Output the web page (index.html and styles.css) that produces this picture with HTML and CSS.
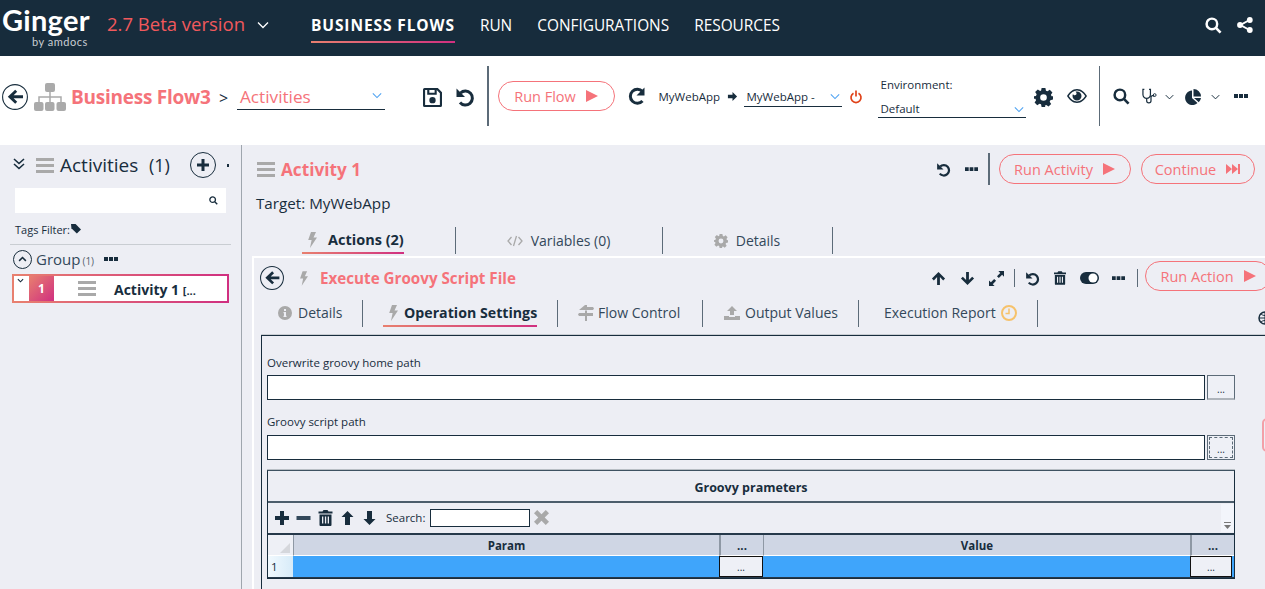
FILE: index.html
```html
<!DOCTYPE html>
<html lang="en">
<head>
<meta charset="utf-8">
<title>Ginger</title>
<link rel="stylesheet" href="styles.css">
</head>
<body>
<svg class="defs" width="0" height="0" aria-hidden="true">
  <defs>
    <symbol id="i-back" viewBox="0 0 26 26"><circle cx="13" cy="13" r="12.4" fill="none" stroke="currentColor" stroke-width="1.1"/><path d="M13.2 5.800l2 2-3.600 3.500H21v3h-9.400l3.600 3.500-2 2L5.800 12.800z" fill="currentColor"/></symbol>
    <symbol id="i-undo" viewBox="0 0 20 20"><path d="M5.500 6A7 7 0 1 1 5 15.500" fill="none" stroke="currentColor" stroke-width="3"/><path d="M1.500 1.500v8.500h8.500z" fill="currentColor"/></symbol>
    <symbol id="i-dots" viewBox="0 0 14 5"><path d="M0 0h4v4H0zM5 0h4v4H5zM10 0h4v4h-4z" fill="currentColor"/></symbol>
    <symbol id="i-bars" viewBox="0 0 18 15"><path d="M0 0h18v3H0zM0 6h18v3H0zM0 12h18v3H0z" fill="currentColor"/></symbol>
    <symbol id="i-bolt" viewBox="0 0 10 16"><path d="M4 0h5L6.500 5.500H10L3 16l1.600-8H1.200z" fill="currentColor"/></symbol>
    <symbol id="i-play" viewBox="0 0 12 12"><path d="M0 0l12 6-12 6z" fill="currentColor"/></symbol>
    <symbol id="i-search" viewBox="0 0 18 18"><circle cx="7.300" cy="7.300" r="5.600" fill="none" stroke="currentColor" stroke-width="2.600"/><path d="M11.500 11.500l5 5" stroke="currentColor" stroke-width="2.800"/></symbol>
    <symbol id="i-chev" viewBox="0 0 12 8"><path d="M1 1.500l5 5 5-5" fill="none" stroke="currentColor" stroke-width="1.300"/></symbol>
    <symbol id="i-gear" viewBox="0 0 20 20"><path fill-rule="evenodd" d="M8 0h4l.6 2.800 1.600.7 2.400-1.600 2.800 2.800-1.600 2.400.7 1.600L20 8.800v3.400l-2.800.6-.7 1.600 1.600 2.400-2.800 2.800-2.400-1.600-1.600.7L12 20H8l-.6-2.800-1.600-.7L3.400 18.100.6 15.300l1.600-2.400-.7-1.600L0 11.200V8.800l2.100-.5.700-1.600L1.200 4.300 4 1.500l2.400 1.600 1.100-.5zM10 6.500a3.500 3.500 0 1 0 0 7 3.500 3.500 0 0 0 0-7z" fill="currentColor"/></symbol>
    <symbol id="i-up" viewBox="0 0 16 16"><path d="M8 1l7 7-2 2-3.500-3.500V15h-3V6.500L3 10 1 8z" fill="currentColor"/></symbol>
    <symbol id="i-down" viewBox="0 0 16 16"><path d="M8 15L1 8l2-2 3.500 3.500V1h3v8.500L13 6l2 2z" fill="currentColor"/></symbol>
    <symbol id="i-trash" viewBox="0 0 14 16"><path fill-rule="evenodd" d="M5 0h4l1 1.500h4v2H0v-2h4zM1 4.500h12V15a1 1 0 0 1-1 1H2a1 1 0 0 1-1-1zM3.500 6.500v7h1.300v-7zM6.400 6.500v7h1.300v-7zM9.200 6.500v7h1.300v-7z" fill="currentColor"/></symbol>
  </defs>
</svg>

<header class="topbar">
  <div class="logo">
    <span class="logo-name">Ginger</span>
    <span class="logo-by">by amdocs</span>
  </div>
  <span class="version">2.7 Beta version</span>
  <svg class="version-chev"><use href="#i-chev"/></svg>
  <nav class="nav">
    <a class="nav-item nav-active">BUSINESS FLOWS</a>
    <a class="nav-item">RUN</a>
    <a class="nav-item">CONFIGURATIONS</a>
    <a class="nav-item">RESOURCES</a>
  </nav>
  <div class="top-icons">
    <svg class="top-search"><use href="#i-search"/></svg>
    <svg class="top-share" viewBox="0 0 16 16"><path d="M12.500 3L3.500 8l9 5" fill="none" stroke="currentColor" stroke-width="2"/><circle cx="12.800" cy="3" r="2.900" fill="currentColor"/><circle cx="3" cy="8" r="2.900" fill="currentColor"/><circle cx="12.800" cy="13" r="2.900" fill="currentColor"/></svg>
  </div>
</header>

<section class="flowbar">
  <svg class="flow-back"><use href="#i-back"/></svg>
  <svg class="flow-org" viewBox="0 0 32 28"><path d="M16 8v6M5 20v-6h22v6M16 14v6" fill="none" stroke="#aaa" stroke-width="1.500"/><rect x="11" y="0" width="10" height="9" rx="2" fill="#aaa"/><rect x="0" y="19" width="9.500" height="9" rx="2" fill="#aaa"/><rect x="11" y="19" width="9.500" height="9" rx="2" fill="#aaa"/><rect x="22.500" y="19" width="9.500" height="9" rx="2" fill="#aaa"/></svg>
  <span class="flow-name">Business Flow3</span>
  <span class="flow-gt">&gt;</span>
  <div class="select select-view"><span>Activities</span><svg class="sel-chev"><use href="#i-chev"/></svg></div>
  <svg class="flow-save" viewBox="0 0 18 18"><path fill-rule="evenodd" d="M1.500 0H14l4 4v12.500a1.500 1.500 0 0 1-1.500 1.500h-15A1.500 1.500 0 0 1 0 16.500v-15A1.500 1.500 0 0 1 1.500 0zM2 2v14h14V5l-3-3v4.500H4V2zM6 2v2.500h5V2zM9 8.500a3 3 0 1 1 0 6 3 3 0 0 1 0-6z" fill="currentColor"/></svg>
  <svg class="flow-undo"><use href="#i-undo"/></svg>
  <i class="vline flow-div1"></i>
  <button class="pill pill-flow">Run Flow<svg class="pill-play"><use href="#i-play"/></svg></button>
  <svg class="flow-refresh" viewBox="0 0 16 20"><path d="M13.500 5.500A7 7 0 1 0 13.500 15" fill="none" stroke="currentColor" stroke-width="3"/><path d="M15.500 1.500v8h-8z" fill="currentColor"/></svg>
  <span class="flow-app">MyWebApp</span>
  <svg class="flow-arrow" viewBox="0 0 12 12"><path d="M6 1l5 5-5 5V8H1V4h5z" fill="currentColor"/></svg>
  <div class="select select-app"><span>MyWebApp -</span><svg class="sel-chev"><use href="#i-chev"/></svg></div>
  <svg class="flow-power" viewBox="0 0 12 14"><path d="M3.500 3.200a5 5 0 1 0 5 0M6 .5v6" fill="none" stroke="currentColor" stroke-width="1.700"/></svg>
  <div class="env">
    <span class="env-label">Environment:</span>
    <div class="select select-env"><span>Default</span><svg class="sel-chev"><use href="#i-chev"/></svg></div>
  </div>
  <svg class="flow-gear"><use href="#i-gear"/></svg>
  <svg class="flow-eye" viewBox="0 0 20 14"><path fill-rule="evenodd" d="M10 0c4.500 0 8 3.500 10 7-2 3.500-5.500 7-10 7S2 10.500 0 7c2-3.500 5.500-7 10-7zM10 1.500C6.800 1.500 3.800 3.800 1.800 7c2 3.200 5 5.500 8.200 5.500s6.200-2.300 8.200-5.500c-2-3.200-5-5.500-8.200-5.500zM10 2.500a4.500 4.500 0 1 1-4.500 4.500c0-.8.200-1.500.5-2.100a1.800 1.800 0 1 0 2.400-2.100c.5-.200 1-.3 1.600-.3z" fill="currentColor"/></svg>
  <i class="vline flow-div2"></i>
  <svg class="flow-search"><use href="#i-search"/></svg>
  <svg class="flow-steth" viewBox="0 0 16 16"><path d="M2.500 1H1v5.500a4 4 0 0 0 8 0V1H7.500M5 10.500V13a2.300 2.300 0 0 0 4.600 0V9.500a1.800 1.800 0 0 1 3.400-1" fill="none" stroke="currentColor" stroke-width="1.300"/><circle cx="13.500" cy="7" r="1.500" fill="none" stroke="currentColor"/></svg>
  <svg class="flow-chev1"><use href="#i-chev"/></svg>
  <svg class="flow-pie" viewBox="0 0 16 16"><path d="M7 1.500V9l5.500 5A7.300 7.300 0 1 1 7 1.500zM8.500 0a7.500 7.500 0 0 1 7.500 7.500H8.500zM9 9h7a7.500 7.500 0 0 1-2.200 4.200z" fill="currentColor"/></svg>
  <svg class="flow-chev2"><use href="#i-chev"/></svg>
  <svg class="flow-dots"><use href="#i-dots"/></svg>
</section>

<main class="workspace">
  <aside class="sidebar">
    <div class="side-head">
      <svg class="side-dbl" viewBox="0 0 12 12"><path d="M1 1l5 4.500L11 1M1 6l5 4.500L11 6" fill="none" stroke="currentColor" stroke-width="1.600"/></svg>
      <svg class="side-bars"><use href="#i-bars"/></svg>
      <span class="side-title">Activities</span>
      <span class="side-count">(1)</span>
      <span class="side-add"><svg viewBox="0 0 12 12"><path d="M4.500 0h3v4.500H12v3H7.500V12h-3V7.500H0v-3h4.500z" fill="currentColor"/></svg></span>
      <i class="side-clip"></i>
    </div>
    <div class="side-search"><svg><use href="#i-search"/></svg></div>
    <div class="side-tags">
      <span>Tags Filter:</span>
      <svg viewBox="0 0 12 12"><path d="M0 0h5.500L12 6.500 7 11.500.5 5z" fill="currentColor"/></svg>
    </div>
    <div class="side-group">
      <span class="group-toggle"><svg viewBox="0 0 12 8"><path d="M1.500 6.500L6 2l4.500 4.500" fill="none" stroke="currentColor" stroke-width="2"/></svg></span>
      <span class="group-name">Group</span>
      <span class="group-count">(1)</span>
      <svg class="group-dots"><use href="#i-dots"/></svg>
    </div>
    <div class="activity-card">
      <span class="card-caret"><svg viewBox="0 0 8 5"><path d="M1 1l3 3 3-3" fill="none" stroke="currentColor" stroke-width="1.300"/></svg></span>
      <span class="card-num">1</span>
      <svg class="card-bars"><use href="#i-bars"/></svg>
      <span class="card-title">Activity 1 <small>[...</small></span>
    </div>
  </aside>

  <section class="content">
    <div class="act-head">
      <svg class="act-bars"><use href="#i-bars"/></svg>
      <h1 class="act-title">Activity 1</h1>
      <svg class="act-undo"><use href="#i-undo"/></svg>
      <svg class="act-dots"><use href="#i-dots"/></svg>
      <i class="vline act-div"></i>
      <button class="pill pill-act">Run Activity<svg class="pill-play"><use href="#i-play"/></svg></button>
      <button class="pill pill-cont">Continue<svg class="pill-skip" viewBox="0 0 14 10"><path d="M0 0l6 5-6 5zM6 0l6 5-6 5zM12 0h2v10h-2z" fill="currentColor"/></svg></button>
    </div>
    <div class="act-target">Target: MyWebApp</div>
    <div class="tabs act-tabs">
      <div class="tab tab-actions"><span class="tab-on"><svg class="tab-bolt"><use href="#i-bolt"/></svg><b>Actions (2)</b></span></div>
      <div class="tab tab-vars"><svg class="tab-code" viewBox="0 0 16 10"><path d="M4.500 1L1 5l3.500 4M11.500 1L15 5l-3.500 4M9.500 0L6.500 10" fill="none" stroke="currentColor" stroke-width="1.300"/></svg>Variables (0)</div>
      <div class="tab tab-det"><svg class="tab-gear"><use href="#i-gear"/></svg>Details</div>
    </div>

    <div class="panel">
      <div class="panel-head">
        <svg class="panel-back"><use href="#i-back"/></svg>
        <svg class="panel-bolt"><use href="#i-bolt"/></svg>
        <h2 class="panel-title">Execute Groovy Script File</h2>
        <svg class="p-up"><use href="#i-up"/></svg>
        <svg class="p-down"><use href="#i-down"/></svg>
        <svg class="p-expand" viewBox="0 0 16 16"><path d="M10 0h6v6l-2-2-3.500 3.500-2-2L12 2zM6 16H0v-6l2 2 3.500-3.500 2 2L4 14z" fill="currentColor"/></svg>
        <i class="vline p-div1"></i>
        <svg class="p-undo"><use href="#i-undo"/></svg>
        <svg class="p-trash"><use href="#i-trash"/></svg>
        <svg class="p-toggle" viewBox="0 0 19 12"><rect width="19" height="12" rx="6" fill="currentColor"/><circle cx="13" cy="6" r="4.500" fill="#fff"/></svg>
        <svg class="p-dots"><use href="#i-dots"/></svg>
        <i class="vline p-div2"></i>
        <button class="pill pill-action">Run Action<svg class="pill-play"><use href="#i-play"/></svg></button>
      </div>
      <div class="tabs panel-tabs">
        <div class="ptab ptab-det"><svg class="ptab-info" viewBox="0 0 14 14"><path fill-rule="evenodd" d="M7 0a7 7 0 1 1 0 14A7 7 0 0 1 7 0zM6 3v2h2V3zM5.500 6v1.200H6v2.600h-.5V11h3V9.800H8V6z" fill="currentColor"/></svg>Details</div>
        <div class="ptab ptab-op"><span class="tab-on"><svg class="tab-bolt"><use href="#i-bolt"/></svg><b>Operation Settings</b></span></div>
        <div class="ptab ptab-flow"><svg class="ptab-sign" viewBox="0 0 16 16"><path d="M7 0h2v2h6l1 1.500L15 5H1zM7 5.500h2V8h6v3H9v5H7v-5H1L0 9.500 1 8h6z" fill="currentColor"/></svg>Flow Control</div>
        <div class="ptab ptab-out"><svg class="ptab-up" viewBox="0 0 16 14"><path d="M8 0l5 5h-3v4H6V5H3zM0 10h5v1h6v-1h5v4H0z" fill="currentColor"/></svg>Output Values</div>
        <div class="ptab ptab-rep">Execution Report<svg class="ptab-clock" viewBox="0 0 16 16"><circle cx="8" cy="8" r="7" fill="none" stroke="currentColor" stroke-width="2"/><path d="M8 3.500V8.500H4.500" fill="none" stroke="currentColor" stroke-width="1.500"/></svg></div>
      </div>
      <svg class="globe" viewBox="0 0 14 14"><circle cx="7" cy="7" r="6" fill="none" stroke="currentColor" stroke-width="1.500"/><path d="M7 1v12M1 7h12M3 3c2 2 6 2 8 0M3 11c2-2 6-2 8 0" fill="none" stroke="currentColor"/></svg>

      <div class="form-box">
        <label class="f-label f-first">Overwrite groovy home path</label>
        <div class="f-row"><div class="f-input"></div><button class="f-btn">...</button></div>
        <label class="f-label f-second">Groovy script path</label>
        <div class="f-row"><div class="f-input"></div><button class="f-btn f-focus"><span>...</span></button></div>
        <i class="edge-tab"></i>

        <div class="grid-box">
          <div class="grid-title">Groovy prameters</div>
          <div class="grid-tools">
            <svg class="gt-plus" viewBox="0 0 14 14"><path d="M5 0h4v5h5v4H9v5H5V9H0V5h5z" fill="currentColor"/></svg>
            <svg class="gt-minus" viewBox="0 0 14 4"><path d="M0 0h14v4H0z" fill="currentColor"/></svg>
            <svg class="gt-trash"><use href="#i-trash"/></svg>
            <svg class="gt-up" viewBox="0 0 12 14"><path d="M6 0l6 6H8.500v8h-5V6H0z" fill="currentColor"/></svg>
            <svg class="gt-down" viewBox="0 0 12 14"><path d="M6 14L0 8h3.500V0h5v8H12z" fill="currentColor"/></svg>
            <span class="gt-label">Search:</span>
            <div class="gt-input"></div>
            <svg class="gt-x" viewBox="0 0 14 14"><path d="M3 0l4 4 4-4 3 3-4 4 4 4-3 3-4-4-4 4-3-3 4-4-4-4z" fill="currentColor"/></svg>
            <div class="gt-scroll"><svg viewBox="0 0 7 7"><path d="M0 0h7v1H0zM0 3h7L3.500 7z" fill="currentColor"/></svg></div>
          </div>
          <div class="dg">
            <div class="dg-corner"><i></i></div>
            <div class="dg-h">Param</div>
            <div class="dg-h dg-h-b">...</div>
            <div class="dg-h">Value</div>
            <div class="dg-h dg-h-b">...</div>
            <div class="dg-rowhead">1</div>
            <div class="dg-c"></div>
            <div class="dg-c"><button class="dg-btn">...</button></div>
            <div class="dg-c"></div>
            <div class="dg-c"><button class="dg-btn dg-btn-last">...</button></div>
          </div>
        </div>
      </div>
    </div>
  </section>
</main>
</body>
</html>
```
FILE: styles.css
```css
* { box-sizing: border-box; }
html, body { margin: 0; height: 100%; overflow: hidden; }
body { font-family: "Open Sans", "Noto Sans", sans-serif; color: #182d3d; background: #fff; width: 1265px; height: 589px; }
.defs { position: absolute; }
svg { display: block; flex: none; overflow: visible; }
button { font-family: inherit; }
h1, h2 { margin: 0; }
.vline { display: block; flex: none; width: 1px; background: #5c6b78; }

.topbar { height: 56px; background: #172c3c; color: #fff; display: flex; align-items: center; padding: 0 0 6px 2px; }
.logo { width: 89px; height: 47px; display: flex; flex-direction: column; align-items: flex-start; margin-top: 5px; }
.logo-name { font-family: Lato, sans-serif; font-weight: 700; font-size: 29px; line-height: 32px; letter-spacing: .3px; }
.logo-by { font-family: Lato, sans-serif; font-size: 11px; line-height: 12px; margin-left: 30px; color: #c9ced3; letter-spacing: .5px; }
.version { margin: -3px 0 0 16px; font-size: 18.500px; color: #f1595c; width: 138px; white-space: nowrap; }
.version-chev { margin-left: 12px; width: 12px; height: 8px; color: #fff; }
.nav { display: flex; margin: 2px 0 0 42px; align-items: center; gap: 25px; }
.nav-item { height: 33px; font-size: 15.400px; line-height: 31px; color: #fff; white-space: nowrap; border-bottom: 2px solid transparent; }
.nav-active { font-size: 15.500px; font-weight: 700; border-image: linear-gradient(90deg, #e8806f, #d02f80) 1; letter-spacing: .9px; }
.top-icons { margin-left: auto; display: flex; align-items: center; gap: 15px; padding-right: 12px; }
.top-search { width: 17px; height: 17px; }
.top-share { width: 16px; height: 16px; }

.flowbar { height: 89px; background: #fff; display: flex; align-items: center; padding: 2px 0 0 2px; color: #182d3d; }
.flow-back { width: 26px; height: 26px; margin-top: -9px; }
.flow-org { width: 32px; height: 28px; margin-left: 6px; margin-top: -9px; }
.flow-name { margin-left: 5px; font-size: 19px; font-weight: 700; color: #f5737a; width: 141px; margin-top: -9px; white-space: nowrap; letter-spacing: -.25px; }
.flow-gt { margin-left: 7px; width: 18px; font-size: 16px; margin-top: -7px; }
.select { position: relative; display: flex; align-items: center; border-bottom: 1px solid #182d3d; white-space: nowrap; }
.sel-chev { position: absolute; right: 2px; top: 6px; width: 10px; height: 7px; color: #4fa3f2; }
.select-view { width: 148px; height: 26px; font-size: 17.200px; color: #f5737a; padding-left: 3px; margin-top: -9px; }
.select-view .sel-chev { top: 8px; right: 3px; }
.flow-save { width: 19px; height: 19px; margin-left: 38px; margin-top: -9px; }
.flow-undo { width: 20px; height: 20px; margin-left: 13px; margin-top: -9px; }
.flow-div1 { height: 60px; margin-left: 12px; margin-top: -11px; width: 1.500px; }
.pill { display: flex; align-items: center; justify-content: center; background: transparent; border: 1px solid #f5737a; border-radius: 15px; color: #f5737a; height: 30px; padding: 0; font-size: 14.500px; white-space: nowrap; flex: none; }
.pill-play { width: 12px; height: 12px; margin-left: 10px; }
.pill-flow { width: 117px; margin-left: 9px; margin-top: -11px; }
.flow-refresh { width: 16px; height: 20px; margin-left: 14px; margin-top: -11px; }
.flow-app { font-size: 11.500px; margin-left: 14px; width: 68px; margin-top: -11px; white-space: nowrap; }
.flow-arrow { width: 11px; height: 11px; margin-top: -11px; }
.select-app { width: 98px; height: 20px; font-size: 11.500px; margin-left: 6px; padding-left: 3px; margin-top: -9px; }
.flow-power { width: 12px; height: 14px; margin-left: 8px; margin-top: -10px; color: #e0431a; }
.env { display: flex; flex-direction: column; margin-left: 16px; width: 148px; margin-top: -9px; }
.env-label { font-size: 11.500px; line-height: 16px; padding-left: 3px; }
.select-env { height: 25px; font-size: 11.500px; padding: 7px 0 0 3px; }
.select-env .sel-chev { top: 13px; }
.flow-gear { width: 19px; height: 19px; margin-left: 8px; margin-top: -9px; }
.flow-eye { width: 20px; height: 14px; margin-left: 14px; margin-top: -11px; }
.flow-div2 { height: 60px; margin-left: 12px; margin-top: -11px; width: 1.500px; }
.flow-search { width: 17px; height: 17px; margin-left: 13px; margin-top: -11px; }
.flow-steth { width: 15px; height: 16px; margin-left: 12px; margin-top: -11px; }
.flow-chev1, .flow-chev2 { width: 9px; height: 6px; margin-top: -9px; }
.flow-chev1 { margin-left: 8px; }
.flow-pie { width: 16px; height: 16px; margin-left: 11px; margin-top: -10px; }
.flow-chev2 { margin-left: 10px; }
.flow-dots { width: 14px; height: 5px; margin-left: 14px; margin-top: -11px; }

.workspace { height: 444px; display: flex; background: #edeef4; }
.sidebar { width: 242px; flex: none; border-right: 1.500px solid #9fa6ae; padding-left: 13px; overflow: hidden; position: relative; }
.side-head { display: flex; align-items: center; height: 40px; }
.side-dbl { width: 12px; height: 12px; margin-top: -3px; }
.side-bars { width: 18px; height: 15px; margin-left: 11px; color: #a9a9a9; }
.side-title { margin-left: 6px; font-size: 19px; width: 80px; white-space: nowrap; }
.side-count { margin-left: 9px; font-size: 18px; width: 22px; }
.side-add { margin-left: 19px; width: 26px; height: 26px; border: 1px solid #182d3d; border-radius: 50%; display: flex; align-items: center; justify-content: center; }
.side-add svg { width: 12px; height: 12px; }
.side-clip { width: 2px; height: 3px; background: #182d3d; margin-left: 11px; }
.side-search { width: 211px; height: 25px; margin-left: 2px; margin-top: 3px; background: #fff; display: flex; align-items: center; justify-content: flex-end; padding-right: 8px; }
.side-search svg { width: 9px; height: 9px; }
.side-tags { display: flex; align-items: center; height: 20px; margin: 6px 0 0 2px; font-size: 11px; gap: 1px; }
.side-tags svg { width: 10px; height: 10px; }
.side-group { display: flex; align-items: center; height: 30px; margin: 5px 0 0 -3px; width: 221px; border-top: 1px solid #c9cdd2; padding-left: 3px; padding-bottom: 1px; }
.group-toggle { width: 19px; height: 19px; border: 1px solid #182d3d; border-radius: 50%; display: flex; align-items: center; justify-content: center; }
.group-toggle svg { width: 9px; height: 6px; }
.group-name { margin-left: 4px; font-size: 15px; color: #33485a; }
.group-count { margin-left: 2px; font-size: 10px; color: #55626e; margin-top: 3px; }
.group-dots { width: 14px; height: 5px; margin-left: 10px; }
.activity-card { display: flex; align-items: stretch; height: 29px; width: 217px; margin: 0 0 0 -1px; background: #fff; border: 2px solid; border-image: linear-gradient(90deg, #e8806f, #d02f80) 1; }
.card-caret { width: 15px; padding: 2px 0 0 3px; }
.card-caret svg { width: 7px; height: 5px; }
.card-num { width: 25px; background: linear-gradient(135deg, #e8806f, #d02f80); color: #fff; font-size: 12px; font-weight: 700; display: flex; align-items: center; justify-content: center; }
.card-bars { width: 18px; height: 15px; color: #a9a9a9; margin: 5px 0 0 24px; }
.card-title { margin-left: 18px; font-size: 14px; font-weight: 700; line-height: 27px; white-space: nowrap; }
.card-title small { font-size: 11px; }

.content { flex: 1; min-width: 0; padding-left: 9px; overflow: hidden; position: relative; }
.act-head { display: flex; align-items: center; height: 48px; padding-left: 6px; }
.act-bars { width: 18px; height: 15px; color: #a9a9a9; }
.act-title { margin-left: 6px; font-size: 17.200px; font-weight: 700; color: #f5737a; width: 655px; white-space: nowrap; }
.act-undo { width: 15px; height: 15px; }
.act-dots { width: 13px; height: 5px; margin-left: 14px; }
.act-div { height: 32px; margin-left: 10px; width: 1.500px; }
.pill-act { width: 132px; margin-left: 9px; }
.pill-cont { width: 114px; margin-left: 10px; }
.pill-skip { width: 14px; height: 10px; margin-left: 10px; }
.act-target { font-size: 15.200px; line-height: 20px; padding-left: 5px; }
.tabs { display: flex; align-items: stretch; }
.act-tabs { height: 27px; margin-top: 14px; font-size: 14px; }
.tab { display: flex; align-items: center; justify-content: center; border-right: 1.500px solid #5c6b78; white-space: nowrap; color: #33485a; }
.tab-actions { width: 204.500px; justify-content: flex-start; padding-left: 51px; }
.tab-vars { width: 207px; }
.tab-det { width: 170px; }
.tab-on { display: flex; align-items: center; height: 27px; padding-left: 5px; border-bottom: 2.500px solid; border-image: linear-gradient(90deg, #e8806f, #d02f80) 1; }
.tab-bolt { width: 10px; height: 16px; color: #a9a9a9; margin-right: 11px; }
.tab-on b { color: #182d3d; font-weight: 700; font-size: 14.500px; }
.ptab-op .tab-bolt { margin-right: 6px; }
.ptab-op .tab-on b { font-size: 14.200px; }
.tab-code { width: 16px; height: 10px; color: #a9a9a9; margin-right: 8px; }
.tab-gear { width: 14px; height: 14px; color: #a9a9a9; margin-right: 8px; }

.panel { margin: 2px 0 0 1px; width: 1100px; border-top: 2px solid #fff; border-left: 2px solid #fff; height: 400px; position: relative; }
.panel-head { display: flex; align-items: center; height: 40px; padding-left: 6px; }
.panel-back { width: 24px; height: 24px; }
.panel-bolt { width: 9px; height: 15px; margin-left: 15px; color: #a9a9a9; }
.panel-title { margin-left: 12px; font-size: 15.200px; font-weight: 700; color: #f5737a; width: 611px; white-space: nowrap; }
.p-up, .p-down { width: 15px; height: 15px; }
.p-down { margin-left: 14px; }
.p-expand { width: 15px; height: 15px; margin-left: 14px; }
.p-div1 { height: 18px; margin-left: 10px; }
.p-undo { width: 15px; height: 15px; margin-left: 10px; }
.p-trash { width: 12px; height: 14px; margin-left: 14px; }
.p-toggle { width: 19px; height: 12px; margin-left: 14px; }
.p-dots { width: 13px; height: 5px; margin-left: 13px; }
.p-div2 { height: 18px; margin-left: 12px; }
.pill-action { width: 126px; margin: -4px 0 0 7px; }
.panel-tabs { height: 27px; margin-top: 2px; font-size: 14px; }
.ptab { display: flex; align-items: center; border-right: 1.500px solid #5c6b78; white-space: nowrap; color: #33485a; padding-bottom: 2px; }
.ptab-det { width: 109px; padding-left: 24px; }
.ptab-op { width: 195px; padding: 0 0 0 20px; }
.ptab-flow { width: 145px; padding-left: 20px; }
.ptab-out { width: 156px; padding-left: 21px; }
.ptab-rep { width: 179px; padding-left: 25px; }
.ptab-info { width: 14px; height: 14px; color: #a9a9a9; margin-right: 6px; }
.ptab-sign { width: 16px; height: 16px; color: #a9a9a9; margin-right: 4px; }
.ptab-up { width: 16px; height: 14px; color: #a9a9a9; margin-right: 5px; }
.ptab-clock { width: 16px; height: 16px; color: #f6c26b; margin-left: 5px; }
.globe { position: absolute; left: 1004px; top: 53px; width: 14px; height: 14px; }

.form-box { position: relative; margin: 8px 0 0 7px; width: 1100px; height: 300px; border-top: 1px solid #182d3d; border-left: 1px solid #182d3d; box-shadow: 0 -1px 0 #c9cdd2; padding-left: 5px; }
.f-label { display: block; font-size: 11.500px; line-height: 16px; color: #182d3d; }
.f-first { margin-top: 19px; }
.f-second { margin-top: 14px; }
.f-row { display: flex; gap: 2px; height: 25px; margin-top: 4px; }
.f-second + .f-row { margin-top: 5px; }
.f-input { width: 938px; background: #fff; border: 1px solid #182d3d; }
.f-btn { width: 28px; height: 25px; background: #eef0f6; border: 1px solid #5c6b78; border-bottom: 2px solid #aeb4bb; font-size: 10px; line-height: 14px; padding: 4px 0 0; color: #182d3d; }
.f-focus { border: 1px solid #5c6b78; padding: 1px; }
.f-focus span { display: block; height: 100%; border: 1px dashed #5c6b78; padding-top: 4px; }
.edge-tab { position: absolute; left: 1000px; top: 82px; width: 10px; height: 34px; border: 2px solid #f3a0a8; border-radius: 5px; }

.grid-box { width: 968px; margin-top: 10px; border: 1px solid #182d3d; border-top-color: #3f5261; box-shadow: 0 -1px 0 #b9bfc5; height: 109px; }
.grid-title { height: 32px; border-bottom: 2px solid #4c5d6b; text-align: center; font-size: 12.500px; font-weight: 700; line-height: 33px; }
.grid-tools { position: relative; display: flex; align-items: center; height: 32px; padding: 0 0 1px 7px; border-bottom: 2px solid #26394a; }
.gt-plus { width: 14px; height: 14px; }
.gt-minus { width: 15px; height: 4px; margin-left: 7px; color: #33485a; }
.gt-trash { width: 15px; height: 16px; margin-left: 7px; }
.gt-up { width: 13px; height: 14px; margin-left: 8px; }
.gt-down { width: 13px; height: 14px; margin-left: 9px; }
.gt-label { font-size: 11.500px; margin-left: 10px; }
.gt-input { width: 100px; height: 18px; margin-left: 5px; background: #fff; border: 1px solid #182d3d; }
.gt-x { width: 15px; height: 15px; margin-left: 4px; color: #a9a9a9; }
.gt-scroll { position: absolute; right: 0; top: 1px; bottom: 1px; width: 13px; background: #f3f5fb; display: flex; align-items: flex-end; justify-content: center; padding-bottom: 3px; }
.gt-scroll svg { width: 7px; height: 7px; color: #777; }
.dg { display: grid; grid-template-columns: 25px 426px 44px 427px 44px; grid-template-rows: 21px 22px; }
.dg-corner { background: #eef0f6; display: flex; align-items: flex-end; justify-content: flex-end; padding: 0 3px 2px 0; border-bottom: 1px solid #fff; }
.dg-corner i { display: block; width: 0; height: 0; border-style: solid; border-width: 0 0 10px 10px; border-color: transparent transparent #d5d7dc transparent; }
.dg-h { background: #cfd6e4; border-left: 1px solid #8e98a4; border-bottom: 1px solid #fff; text-align: center; font-size: 11.500px; font-weight: 700; line-height: 22px; }
.dg-h-b { border-left-width: 2px; }
.dg-rowhead { background: linear-gradient(90deg, #f1f9fe, #d7ebf8); font-size: 11.500px; line-height: 22px; padding-left: 3px; border-bottom: 1px solid #26394a; color: #182d3d; }
.dg-c { background: #3fa5fb; border-bottom: 1px solid #26394a; min-width: 0; }
.dg-btn { display: block; width: 100%; height: 21px; margin: 0; padding: 0; background: #eef0f6; border: 1.500px solid #111; font-size: 10px; color: #182d3d; }
.dg-btn-last { width: 42px; }
```
